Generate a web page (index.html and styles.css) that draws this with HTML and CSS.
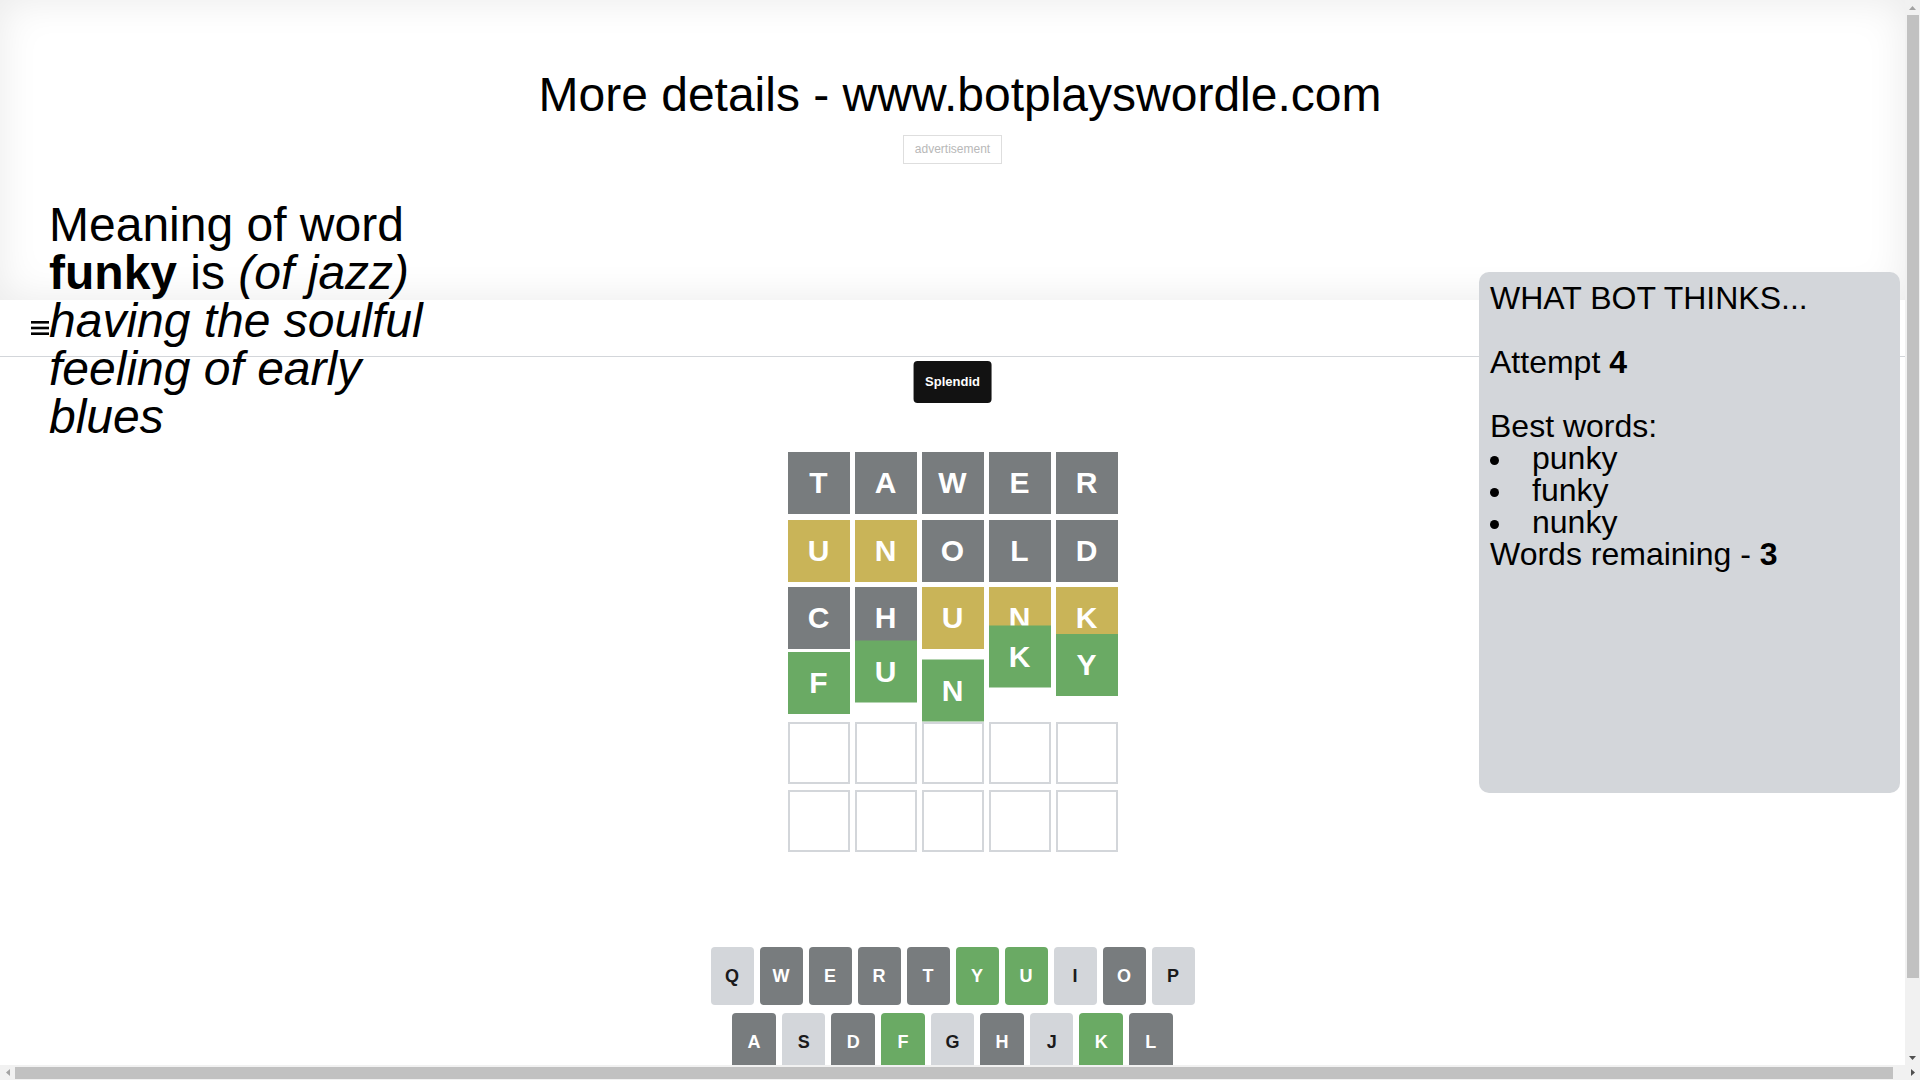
FILE: index.html
```html
<!DOCTYPE html>
<html lang="en">
<head>
<meta charset="utf-8">
<title>Bot plays Wordle</title>
<link rel="stylesheet" href="styles.css">
</head>
<body>
<div class="window">
  <div class="page">
    <section class="promo">
      <h1 class="promo-title">More details - www.botplayswordle.com</h1>
      <div class="ad-label">advertisement</div>
    </section>

    <div class="definition">Meaning of word <b>funky</b> is <i>(of jazz) having the soulful feeling of early blues</i></div>

    <aside class="bot-panel">
      WHAT BOT THINKS...<br><br>Attempt <b>4</b><br><br>Best words:
      <ul class="best-list">
        <li>punky</li>
        <li>funky</li>
        <li>nunky</li>
      </ul>
      Words remaining - <b>3</b>
    </aside>

    <header class="game-header">
      <button class="menu-btn" aria-label="menu">
        <svg width="18" height="14" viewBox="0 0 18 14"><rect x="0" y="0" width="18" height="2.6" fill="#000"/><rect x="0" y="5.7" width="18" height="2.6" fill="#000"/><rect x="0" y="11.4" width="18" height="2.6" fill="#000"/></svg>
      </button>
    </header>

    <main class="game">
      <div class="toast">Splendid</div>

      <div class="board">
        <div class="row">
          <div class="tile absent">T</div><div class="tile absent">A</div><div class="tile absent">W</div><div class="tile absent">E</div><div class="tile absent">R</div>
        </div>
        <div class="row">
          <div class="tile present">U</div><div class="tile present">N</div><div class="tile absent">O</div><div class="tile absent">L</div><div class="tile absent">D</div>
        </div>
        <div class="row">
          <div class="tile absent">C</div><div class="tile absent">H</div><div class="tile present">U</div><div class="tile present">N</div><div class="tile present">K</div>
        </div>
        <div class="row">
          <div class="tile correct bounce-1">F</div><div class="tile correct bounce-2">U</div><div class="tile correct bounce-3">N</div><div class="tile correct bounce-4">K</div><div class="tile correct bounce-5">Y</div>
        </div>
        <div class="row">
          <div class="tile empty"></div><div class="tile empty"></div><div class="tile empty"></div><div class="tile empty"></div><div class="tile empty"></div>
        </div>
        <div class="row">
          <div class="tile empty"></div><div class="tile empty"></div><div class="tile empty"></div><div class="tile empty"></div><div class="tile empty"></div>
        </div>
      </div>

      <div class="keyboard">
        <div class="kb-row">
          <button class="key">Q</button><button class="key k-absent">W</button><button class="key k-absent">E</button><button class="key k-absent">R</button><button class="key k-absent">T</button><button class="key k-correct">Y</button><button class="key k-correct">U</button><button class="key">I</button><button class="key k-absent">O</button><button class="key">P</button>
        </div>
        <div class="kb-row">
          <div class="spacer-half"></div>
          <button class="key k-absent">A</button><button class="key">S</button><button class="key k-absent">D</button><button class="key k-correct">F</button><button class="key">G</button><button class="key k-absent">H</button><button class="key">J</button><button class="key k-correct">K</button><button class="key k-absent">L</button>
          <div class="spacer-half"></div>
        </div>
        <div class="kb-row">
          <button class="key wide">ENTER</button><button class="key">Z</button><button class="key">X</button><button class="key k-absent">C</button><button class="key">V</button><button class="key">B</button><button class="key k-correct">N</button><button class="key">M</button><button class="key wide" aria-label="backspace"><svg width="24" height="24" viewBox="0 0 24 24"><path fill="#1a1a1b" d="M22 3H7c-.69 0-1.23.35-1.59.88L0 12l5.41 8.11c.36.53.9.89 1.59.89h15c1.1 0 2-.9 2-2V5c0-1.1-.9-2-2-2zm0 16H7.07L2.4 12l4.66-7H22v14zm-11.59-2L14 13.41 17.59 17 19 15.59 15.41 12 19 8.41 17.59 7 14 10.59 10.41 7 9 8.41 12.59 12 9 15.59z"/></svg></button>
        </div>
      </div>
    </main>
  </div>

  <div class="vscroll">
    <div class="sb-btn"><svg width="7" height="4" viewBox="0 0 7 4"><polygon points="3.5,0 7,4 0,4" fill="#a3a3a3"/></svg></div>
    <div class="sb-track sb-track-v"><div class="sb-thumb-v"></div></div>
    <div class="sb-btn"><svg width="7" height="4" viewBox="0 0 7 4"><polygon points="0,0 7,0 3.5,4" fill="#505050"/></svg></div>
  </div>

  <div class="hscroll">
    <div class="sb-btn"><svg width="4" height="7" viewBox="0 0 4 7"><polygon points="4,0 4,7 0,3.5" fill="#a3a3a3"/></svg></div>
    <div class="sb-track sb-track-h"><div class="sb-thumb-h"></div></div>
    <div class="sb-btn"><svg width="4" height="7" viewBox="0 0 4 7"><polygon points="0,0 4,3.5 0,7" fill="#505050"/></svg></div>
  </div>
</div>
</body>
</html>
```

FILE: styles.css
```css
* {
  box-sizing: border-box;
}

html,
body {
  margin: 0;
  padding: 0;
}

body {
  font-family: "Liberation Sans", Arial, Helvetica, sans-serif;
  color: #000;
  background: #fff;
  overflow: hidden;
}

/* ---------- browser window frame ---------- */
.window {
  width: 1920px;
  height: 1080px;
  display: grid;
  grid-template-columns: 1905px 15px;
  grid-template-rows: 1065px 15px;
}

.page {
  position: relative;
  overflow: hidden;
}

.vscroll {
  display: flex;
  flex-direction: column;
  background: #f1f1f1;
}

.hscroll {
  grid-column: 1 / span 2;
  display: flex;
  background: #f1f1f1;
}

.sb-btn {
  width: 15px;
  height: 15px;
  flex: none;
  display: flex;
  align-items: center;
  justify-content: center;
}

.sb-track {
  flex: 1;
  display: flex;
}

.sb-track-v {
  flex-direction: column;
}

.sb-thumb-v {
  height: 963px;
  margin: 0 1px 0 2px;
  background: #c1c1c1;
}

.sb-thumb-h {
  width: 1878px;
  height: 12px;
  margin-top: 2px;
  background: #c1c1c1;
}

/* ---------- promo / ad strip ---------- */
.promo {
  height: 300px;
  padding-top: 67px;
  box-shadow: inset 0 0 40px rgba(0, 0, 0, 0.085);
}

.promo-title {
  width: 1920px;
  margin: 0;
  font-size: 48px;
  font-weight: 400;
  line-height: normal;
  text-align: center;
  white-space: nowrap;
}

.ad-label {
  width: fit-content;
  margin: 13px auto 0;
  padding: 6px 11px;
  border: 1px solid #dedede;
  font-size: 12px;
  line-height: 15px;
  color: #b8b8b8;
}

/* ---------- word meaning overlay ---------- */
.definition {
  position: absolute;
  top: 201px;
  left: 49px;
  width: 420px;
  font-size: 48px;
  line-height: 48px;
}

/* ---------- bot panel ---------- */
.bot-panel {
  position: absolute;
  top: 272px;
  right: 5px;
  width: 421px;
  height: 521px;
  padding: 10px 11px;
  background: #d3d6da;
  border-radius: 10px;
  font-size: 32px;
  line-height: 32px;
}

.best-list {
  margin: 0;
  padding: 0;
  list-style: none;
}

.best-list li::before {
  content: "";
  display: inline-block;
  width: 9px;
  height: 9px;
  margin-right: 33px;
  border-radius: 50%;
  background: #000;
  vertical-align: 4px;
}

/* ---------- game header ---------- */
.game-header {
  height: 57px;
  border-bottom: 1px solid #d3d6da;
  display: flex;
  align-items: center;
  padding-left: 31px;
}

.menu-btn {
  display: flex;
  padding: 0;
  border: 0;
  background: none;
}

/* ---------- game ---------- */
.game {
  position: relative;
  padding-top: 95px;
}

.toast {
  position: absolute;
  top: 4px;
  left: 50%;
  transform: translateX(-50%);
  padding: 13px 12px;
  background: #121212;
  color: #fff;
  border-radius: 4px;
  font-size: 13px;
  font-weight: 700;
  line-height: 16px;
  white-space: nowrap;
}

.board {
  width: 330px;
  height: 400px;
  margin: 0 auto;
  display: grid;
  grid-template-rows: repeat(6, 1fr);
  gap: 5px;
}

.row {
  display: grid;
  grid-template-columns: repeat(5, 1fr);
  gap: 5px;
}

.tile {
  display: flex;
  align-items: center;
  justify-content: center;
  height: 62px;
  font-size: 30px;
  font-weight: 700;
  line-height: 1;
  color: #fff;
  text-transform: uppercase;
}

.tile.absent {
  background: #787c7e;
}

.tile.present {
  background: #c9b458;
}

.tile.correct {
  background: #6aaa64;
}

.tile.empty {
  background: #fff;
  border: 2px solid #d3d6da;
}

.bounce-1 { transform: translateY(-3px); }
.bounce-2 { transform: translateY(-14.5px); }
.bounce-3 { transform: translateY(4.5px); }
.bounce-4 { transform: translateY(-29.5px); }
.bounce-5 { transform: translateY(-21px); }

/* ---------- keyboard ---------- */
.keyboard {
  width: 484px;
  margin: 95px auto 0;
}

.kb-row {
  display: flex;
  margin-bottom: 8px;
}

.key {
  flex: 1;
  height: 58px;
  margin: 0 6px 0 0;
  padding: 0;
  border: 0;
  border-radius: 4px;
  background: #d3d6da;
  color: #1a1a1b;
  font-family: "Liberation Sans", Arial, Helvetica, sans-serif;
  font-size: 18px;
  font-weight: 700;
  display: flex;
  align-items: center;
  justify-content: center;
}

.key:last-of-type {
  margin-right: 0;
}

.key.wide {
  flex: 1.5;
  font-size: 12px;
}

.key.k-absent {
  background: #787c7e;
  color: #fff;
}

.key.k-correct {
  background: #6aaa64;
  color: #fff;
}

.spacer-half {
  flex: 0.5;
}
```
